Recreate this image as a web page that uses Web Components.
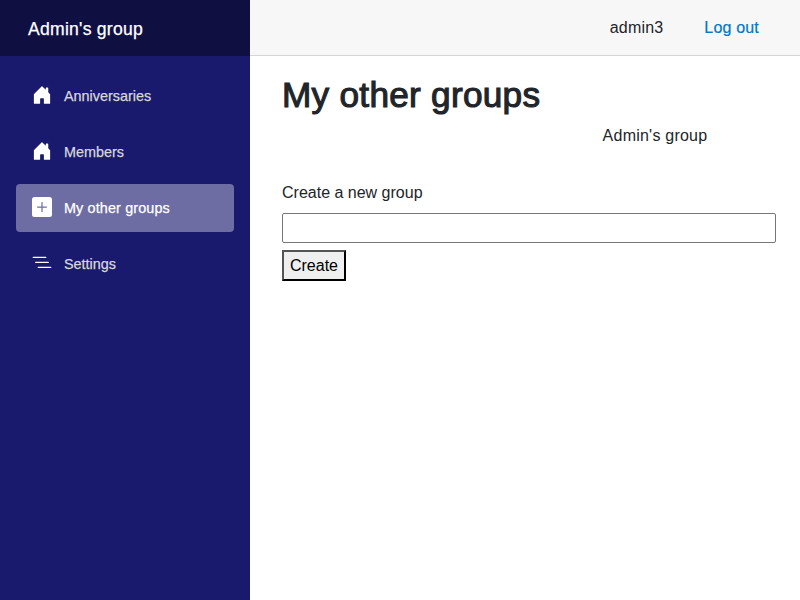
<!DOCTYPE html>
<html lang="en"><head><meta charset="utf-8"><title>My other groups</title>
<style>body{margin:0;font:16px/24px "Liberation Sans",Arial,sans-serif;color:#212529}</style></head><body>
<admin-app></admin-app>
<script>
const make=(name,html)=>customElements.define(name,class extends HTMLElement{
  constructor(){super();this.attachShadow({mode:'open'}).innerHTML=html;}
});
make('nav-item',`<style>
:host{display:flex;align-items:center;box-sizing:border-box;height:48px;padding:0 16px;margin-bottom:8px;border-radius:4px;color:#d7d7d7;font-size:14.4px;line-height:48px;-webkit-text-stroke:.25px}
:host([active]){background:rgba(255,255,255,.37);color:#fff;letter-spacing:.13px}
::slotted(svg){width:20px;height:20px;margin-right:12px;color:#fff;position:relative;top:-1px}
</style><slot name="icon"></slot><slot></slot>`);
make('side-bar',`<style>
:host{display:block;background:#19196e;height:600px}
header{height:56px;line-height:58px;padding-left:28px;box-sizing:border-box;background:#0f0f42;color:#fff;font-size:17.6px;letter-spacing:.24px;-webkit-text-stroke:.25px}
nav{padding:16px}
</style><header><slot name="brand"></slot></header><nav><slot></slot></nav>`);
make('top-bar',`<style>
:host{display:flex;justify-content:flex-end;box-sizing:border-box;height:56px;background:#f7f7f7;border-bottom:1px solid #d6d5d5;padding-right:41px;line-height:55px;gap:41px;letter-spacing:.18px}
a{color:#0077c8;-webkit-text-stroke:.2px}
</style><span><slot></slot></span><a>Log out</a>`);
make('group-form',`<style>
:host{display:block}
label{display:block;margin-bottom:8px}
input{display:block;box-sizing:border-box;width:100%;height:30px;margin:0 0 7px;font:inherit;border:1px solid #767676;border-radius:2px}
button{display:block;box-sizing:border-box;height:31px;width:64px;padding:0;font:inherit;color:#000;background:#efefef;border:2px outset #000}
</style><label>Create a new group</label><input><button>Create</button>`);
make('admin-app',`<style>
:host{display:grid;grid-template-columns:250px 1fr;height:600px}
main{padding:18px 24px 0 32px}
h1{font-size:35.2px;line-height:42px;font-weight:500;margin:0 0 8px;letter-spacing:.27px;-webkit-text-stroke:1.1px}
p{margin:0 0 33px;padding-left:252px;text-align:center;letter-spacing:.23px}
</style>
<side-bar><span slot="brand">Admin's group</span>
<nav-item><svg slot="icon" viewBox="0 0 16 16" fill="currentColor"><path d="M6.5 14.5v-3.505c0-.245.25-.495.5-.495h2c.25 0 .5.25.5.5v3.5a.5.5 0 0 0 .5.5h4a.5.5 0 0 0 .5-.5v-7a.5.5 0 0 0-.146-.354L13 5.793V2.5a.5.5 0 0 0-.5-.5h-1a.5.5 0 0 0-.5.5v1.293L8.354 1.146a.5.5 0 0 0-.708 0l-6 6A.5.5 0 0 0 1.5 7.5v7a.5.5 0 0 0 .5.5h4a.5.5 0 0 0 .5-.5Z"/></svg>Anniversaries</nav-item>
<nav-item><svg slot="icon" viewBox="0 0 16 16" fill="currentColor"><path d="M6.5 14.5v-3.505c0-.245.25-.495.5-.495h2c.25 0 .5.25.5.5v3.5a.5.5 0 0 0 .5.5h4a.5.5 0 0 0 .5-.5v-7a.5.5 0 0 0-.146-.354L13 5.793V2.5a.5.5 0 0 0-.5-.5h-1a.5.5 0 0 0-.5.5v1.293L8.354 1.146a.5.5 0 0 0-.708 0l-6 6A.5.5 0 0 0 1.5 7.5v7a.5.5 0 0 0 .5.5h4a.5.5 0 0 0 .5-.5Z"/></svg>Members</nav-item>
<nav-item active><svg slot="icon" viewBox="0 0 16 16" fill="currentColor"><path d="M2 0a2 2 0 0 0-2 2v12a2 2 0 0 0 2 2h12a2 2 0 0 0 2-2V2a2 2 0 0 0-2-2H2zm6.5 4.5v3h3a.5.5 0 0 1 0 1h-3v3a.5.5 0 0 1-1 0v-3h-3a.5.5 0 0 1 0-1h3v-3a.5.5 0 0 1 1 0z"/></svg>My other groups</nav-item>
<nav-item><svg slot="icon" viewBox="0 0 16 16" fill="currentColor"><path fill-rule="evenodd" d="M4.5 11.5A.5.5 0 0 1 5 11h10a.5.5 0 0 1 0 1H5a.5.5 0 0 1-.5-.5zm-2-4A.5.5 0 0 1 3 7h10a.5.5 0 0 1 0 1H3a.5.5 0 0 1-.5-.5zm-2-4A.5.5 0 0 1 1 3h10a.5.5 0 0 1 0 1H1a.5.5 0 0 1-.5-.5z"/></svg>Settings</nav-item>
</side-bar>
<div><top-bar>admin3</top-bar><main><h1>My other groups</h1><p>Admin's group</p><group-form></group-form></main></div>`);
</script></body></html>
